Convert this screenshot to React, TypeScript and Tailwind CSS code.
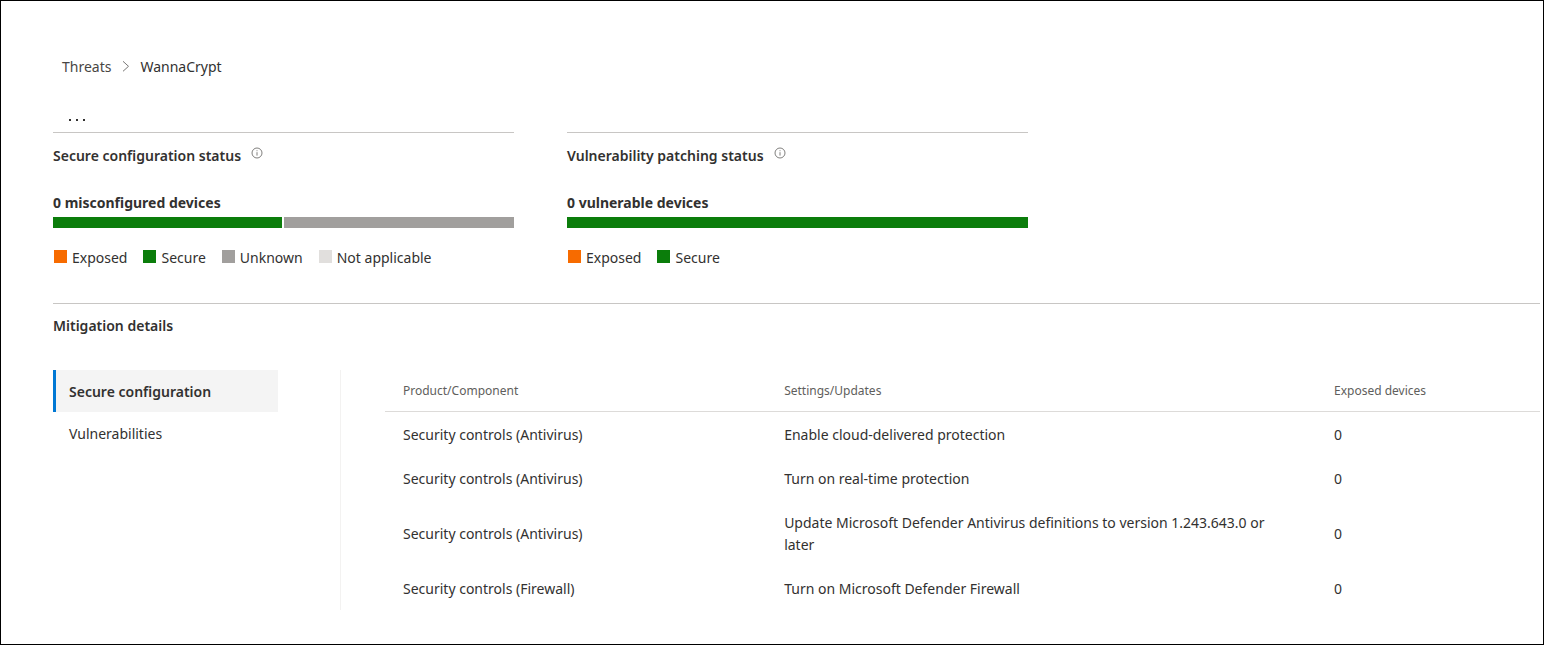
import React from "react";

type LegendItem = { label: string; swatch: string };
type Segment = { color: string; share: number };

const rows = [
  { product: "Security controls (Antivirus)", setting: "Enable cloud-delivered protection", exposed: 0 },
  { product: "Security controls (Antivirus)", setting: "Turn on real-time protection", exposed: 0 },
  {
    product: "Security controls (Antivirus)",
    setting: "Update Microsoft Defender Antivirus definitions to version 1.243.643.0 or later",
    exposed: 0,
  },
  { product: "Security controls (Firewall)", setting: "Turn on Microsoft Defender Firewall", exposed: 0 },
];

function InfoIcon() {
  return (
    <svg width="12" height="12" viewBox="0 0 12 12" fill="none" aria-hidden="true">
      <circle cx="6" cy="6" r="5" stroke="#605e5c" strokeWidth="0.8" />
      <path d="M6 5.2V8.6" stroke="#605e5c" strokeWidth="0.8" />
      <path d="M6 3.3V4.2" stroke="#605e5c" strokeWidth="0.8" />
    </svg>
  );
}

function StatusCard({
  title,
  summary,
  segments,
  legend,
}: {
  title: string;
  summary: string;
  segments: Segment[];
  legend: LegendItem[];
}) {
  return (
    <section className="min-w-0 flex-1 border-t border-[#c8c6c4] pt-3">
      <div className="flex items-start gap-[10px]">
        <h2 className="leading-[22px] font-semibold">{title}</h2>
        <button type="button" aria-label={`About ${title}`} className="mt-[2px]">
          <InfoIcon />
        </button>
      </div>
      <p className="mt-[25px] leading-[22px] font-bold">{summary}</p>
      <div className="mt-[3px] flex h-[11px] gap-[2px]">
        {segments.map((s) => (
          <div key={s.color} className={s.color} style={{ flex: s.share }} />
        ))}
      </div>
      <ul className="mt-[19px] flex flex-wrap gap-x-4 pb-[34px] pl-px">
        {legend.map((item) => (
          <li key={item.label} className="flex items-start gap-[5px] leading-[22px]">
            <span className={`mt-[3px] size-[13px] ${item.swatch}`} />
            {item.label}
          </li>
        ))}
      </ul>
    </section>
  );
}

export default function App() {
  return (
    <div className="min-h-screen border border-black bg-white pr-[3px] pb-[34px] pl-[52px] font-['Noto_Sans','Open_Sans',sans-serif] text-[14px] leading-[22px] text-[#323130]">
      <nav aria-label="Breadcrumb" className="flex items-center gap-[10px] pt-[55px] pl-[9px]">
        <a href="#threats" className="text-[#484644]">
          Threats
        </a>
        <svg width="9" height="12" viewBox="0 0 9 12" fill="none" aria-hidden="true">
          <path d="M2 0.3L7.5 5.3L2 10.3" stroke="#797775" strokeWidth="1" />
        </svg>
        <span aria-current="page">WannaCrypt</span>
      </nav>

      <button type="button" aria-label="More actions" className="mt-[30px] mb-px ml-4 flex h-[23px] items-center gap-[5px]">
        <span className="size-[2px] bg-[#323130]" />
        <span className="size-[2px] bg-[#323130]" />
        <span className="size-[2px] bg-[#323130]" />
      </button>

      <div className="flex max-w-[975px] gap-[53px]">
        <StatusCard
          title="Secure configuration status"
          summary="0 misconfigured devices"
          segments={[
            { color: "bg-[#0b7d0b]", share: 49.9 },
            { color: "bg-[#a19f9d]", share: 50.1 },
          ]}
          legend={[
            { label: "Exposed", swatch: "bg-[#f76b00]" },
            { label: "Secure", swatch: "bg-[#0b7d0b]" },
            { label: "Unknown", swatch: "bg-[#a19f9d]" },
            { label: "Not applicable", swatch: "bg-[#e1dfdd]" },
          ]}
        />
        <StatusCard
          title="Vulnerability patching status"
          summary="0 vulnerable devices"
          segments={[{ color: "bg-[#0b7d0b]", share: 100 }]}
          legend={[
            { label: "Exposed", swatch: "bg-[#f76b00]" },
            { label: "Secure", swatch: "bg-[#0b7d0b]" },
          ]}
        />
      </div>

      <section className="border-t border-[#c8c6c4] pt-[11px]">
        <h2 className="leading-[22px] font-semibold">Mitigation details</h2>
        <div className="mt-[33px] flex">
          <div className="w-[225px] shrink-0">
            <button
              type="button"
              className="block w-full border-l-[3px] border-[#0078d4] bg-[#f4f4f4] pt-[11px] pb-[9px] pl-[13px] text-left font-semibold"
            >
              Secure configuration
            </button>
            <button type="button" className="block w-full pt-[11px] pb-[9px] pl-4 text-left">
              Vulnerabilities
            </button>
          </div>
          <div className="ml-[62px] min-w-0 flex-1 border-l border-[#f3f2f1] pl-11">
            <table className="w-full table-fixed text-left">
              <thead>
                <tr className="border-b border-[#dddbd9] text-[12px] text-[#605e5c]">
                  <th scope="col" className="h-[41px] w-[33%] px-[18px] pt-[2px] font-normal">
                    Product/Component
                  </th>
                  <th scope="col" className="px-[18px] pt-[2px] font-normal">
                    Settings/Updates
                  </th>
                  <th scope="col" className="w-56 px-[18px] pt-[2px] font-normal">
                    Exposed devices
                  </th>
                </tr>
              </thead>
              <tbody>
                {rows.map((row) => (
                  <tr key={row.setting}>
                    <td className="px-[18px] pt-3 pb-[10px]">{row.product}</td>
                    <td className="pt-3 pr-9 pb-[10px] pl-[18px]">{row.setting}</td>
                    <td className="px-[18px] pt-3 pb-[10px]">{row.exposed}</td>
                  </tr>
                ))}
              </tbody>
            </table>
          </div>
        </div>
      </section>
    </div>
  );
}
